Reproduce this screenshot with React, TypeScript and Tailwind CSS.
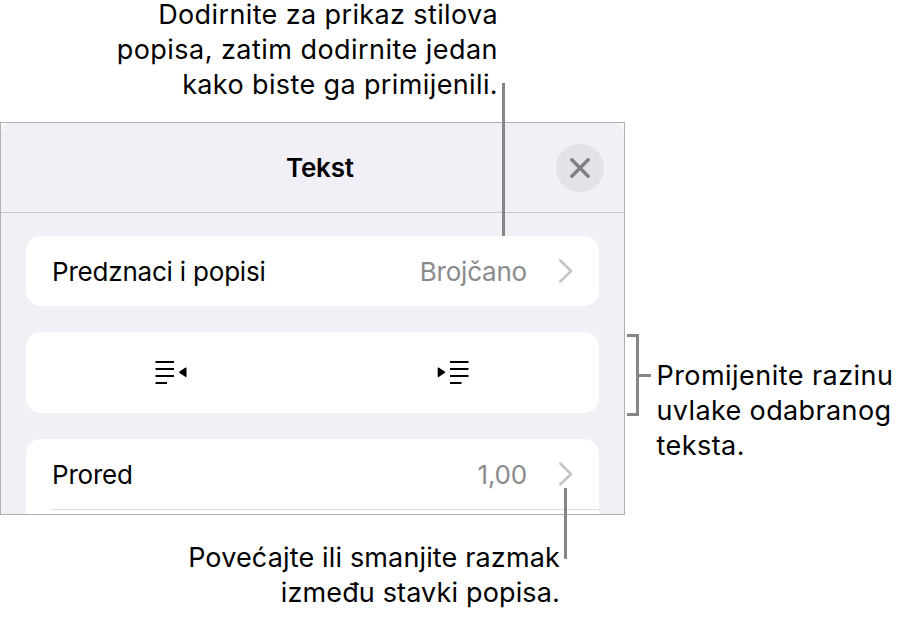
import type { ReactNode } from 'react';

function Chevron() {
  return (
    <svg width="14" height="24" viewBox="0 0 14 24" fill="none" className="shrink-0">
      <path d="M1.3 1.5L12 12L1.3 22.5" stroke="#c4c4c6" strokeWidth="2.5" strokeLinecap="round" strokeLinejoin="round" />
    </svg>
  );
}

function OutdentIcon() {
  return (
    <svg width="32" height="24" viewBox="0 0 32 24" fill="#000">
      <path d="M0.5 1H19V3H0.5zM0.5 8H19V10H0.5zM0.5 15H19V17H0.5zM0.5 22H12V24H0.5z" />
      <path d="M31.5 8V16.6Q31.5 17.4 30.6 17L24.5 13Q23.6 12.3 24.5 11.6L30.6 7.6Q31.5 7.2 31.5 8z" />
    </svg>
  );
}

function IndentIcon() {
  return (
    <svg width="32" height="24" viewBox="0 0 32 24" fill="#000">
      <path d="M13 1H31.5V3H13zM13 8H31.5V10H13zM13 15H31.5V17H13zM13 22H24.5V24H13z" />
      <path d="M0.7 8V16.6Q0.7 17.4 1.6 17L7.7 13Q8.6 12.3 7.7 11.6L1.6 7.6Q0.7 7.2 0.7 8z" />
    </svg>
  );
}

function Row({ label, value }: { label: string; value: ReactNode }) {
  return (
    <div className="flex h-[70px] items-center pl-[26px] pr-[26px] text-[26px] tracking-[-0.2px]">
      <span className="flex-1">{label}</span>
      <span className="mr-8 text-[#8a8a8d]">{value}</span>
      <Chevron />
    </div>
  );
}

export default function App() {
  return (
    <div className="relative h-[619px] w-[902px] overflow-hidden bg-white font-['Inter','Liberation_Sans',sans-serif] text-[27px] leading-[35px] text-black">
      <div className="flex h-[122px] w-[498px] flex-col items-end whitespace-nowrap">
        <span className="mb-[3px] leading-[29px] tracking-[0.38px]">Dodirnite za prikaz stilova</span>
        <span className="tracking-[0.46px]">popisa, zatim dodirnite jedan</span>
        <span className="tracking-[0.38px]">kako biste ga primijenili.</span>
      </div>

      <div className="flex h-[393px]">
        <section className="w-[625px] shrink-0 overflow-hidden border border-[#b0b0b4] bg-[#fafafb]">
          <div className="h-full rounded-t-[10px] bg-[#f1f0f6]">
            <header className="flex h-[90px] items-center border-b border-[#c8c7cc] pl-[285px] pr-[20.5px]">
              <h1 className="flex-1 text-[26px] font-semibold tracking-[-0.2px]">Tekst</h1>
              <button className="flex size-12 items-center justify-center rounded-full bg-[#e3e2e7]">
                <svg width="20" height="20" viewBox="0 0 20 20" fill="none">
                  <path d="M1.8 1.8L18.2 18.2M18.2 1.8L1.8 18.2" stroke="#7f7f84" strokeWidth="3.4" strokeLinecap="round" />
                </svg>
              </button>
            </header>

            <div className="flex flex-col gap-[26px] px-[25px] pt-[23px]">
              <div className="rounded-[15px] bg-white">
                <Row label="Predznaci i popisi" value="Brojčano" />
              </div>
              <div className="flex h-[81px] items-center justify-between rounded-[15px] bg-white pb-px pl-[129px] pr-[130px]">
                <OutdentIcon />
                <IndentIcon />
              </div>
              <div className="h-[90px] rounded-t-[15px] bg-white">
                <Row label="Prored" value="1,00" />
                <div className="ml-[25px] h-px bg-[#dcdcde]" />
              </div>
            </div>
          </div>
        </section>

        <div className="mt-[212px] ml-0.5 flex h-[82px] items-center">
          <div className="h-full w-3 border-y-[3px] border-r-[3px] border-[#868686]" />
          <div className="h-[3px] w-3 bg-[#868686]" />
        </div>
        <div className="mt-[235.5px] ml-[5.5px] flex flex-col whitespace-nowrap">
          <span className="tracking-[0.45px]">Promijenite razinu</span>
          <span className="tracking-[0.37px]">uvlake odabranog</span>
          <span className="tracking-[0.45px]">teksta.</span>
        </div>
      </div>

      <div className="mt-[25px] flex w-[560px] flex-col items-end whitespace-nowrap">
        <span className="tracking-[0.15px]">Povećajte ili smanjite razmak</span>
        <span className="tracking-[0.15px]">između stavki popisa.</span>
      </div>

      {/* leader lines over the panel */}
      <div className="absolute left-[502px] top-[83px] h-[153px] w-[3px] bg-[#868686]" />
      <div className="absolute left-[564px] top-[488px] h-[71px] w-[3px] bg-[#868686]" />
    </div>
  );
}
